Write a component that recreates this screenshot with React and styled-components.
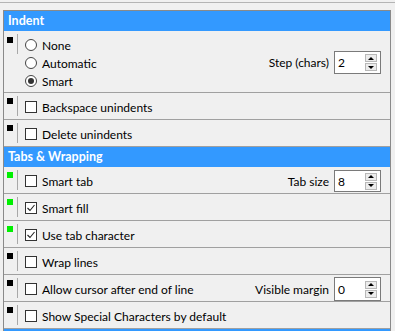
import React from "react";
import styled, { createGlobalStyle } from "styled-components";

const GlobalStyle = createGlobalStyle`
	html, body {
		margin: 0;
		padding: 0;
		background: #f0f0f0;
		overflow: hidden;
	}
	body {
		font-family: Lato, "Noto Sans", sans-serif;
		font-size: 12px;
		color: #000;
	}
`;

const Frame = styled.div`
	margin-top: 2px;
	border-top: 1px solid #b4b4b4;
	padding: 7px 0 0 3px;
	height: 340px;
`;

const Panel = styled.div`
	width: 386px;
	border: 1px solid #8a8a8a;
	border-bottom: none;
	background: #f0f0f0;
`;

const Header = styled.div`
	height: 20px;
	line-height: 20px;
	padding-left: 4px;
	background: #3399ff;
	color: #fff;
	font-size: 12.5px;
	font-weight: 700;
`;

const Row = styled.div`
	display: flex;
	height: ${props => props.height || 26}px;
	border-bottom: 1px solid #a0a0a0;
`;

const Gutter = styled.div`
	width: 13px;
	flex: none;
	padding: ${props => props.top || 5}px 0 0 3px;
	box-sizing: border-box;
`;

const Marker = styled.div`
	width: 6px;
	height: 6px;
	background: ${props => (props.on ? "#00f000" : "#000")};
`;

const Divider = styled.div`
	width: 1px;
	height: 20px;
	margin-top: 3px;
	flex: none;
	background: #a8a8a8;
`;

const Content = styled.div`
	flex: 1;
	display: flex;
	align-items: center;
	padding: 2px 9px 0 7px;
`;

const Option = styled.label`
	display: flex;
	align-items: center;
	gap: 5px;
	height: 18px;
	white-space: nowrap;
`;

const Box = styled.span`
	width: 12px;
	height: 12px;
	box-sizing: border-box;
	border: 1px solid #333;
	background: #fff;
	display: flex;
	align-items: center;
	justify-content: center;
	flex: none;
`;

const Radio = styled(Box)`
	border-radius: 50%;
	border-color: #444;

	&::after {
		content: "";
		display: ${props => (props.checked ? "block" : "none")};
		width: 6px;
		height: 6px;
		border-radius: 50%;
		background: #333;
	}
`;

const RadioGroup = styled.div`
	display: flex;
	flex-direction: column;
	align-self: flex-start;
	padding-top: 3px;
`;

const Spacer = styled.div`
	flex: 1;
`;

const SpinLabel = styled.span`
	margin-right: 5px;
	white-space: nowrap;
`;

const SpinBox = styled.div`
	width: 47px;
	height: ${props => props.height || 22}px;
	box-sizing: border-box;
	border: 1px solid #7a7a7a;
	background: #fff;
	display: flex;
	align-items: center;
	padding: 0 3px 0 3px;
`;

const SpinValue = styled.span`
	flex: 1;
`;

const SpinButtons = styled.div`
	display: flex;
	flex-direction: column;
	gap: 1px;
`;

const SpinButton = styled.div`
	width: 12px;
	height: 8px;
	box-sizing: border-box;
	border: 1px solid #b8b8b8;
	background: #ececec;
	display: flex;
	align-items: center;
	justify-content: center;

	&::after {
		content: "";
		border-left: 3px solid transparent;
		border-right: 3px solid transparent;
		${props =>
			props.down
				? "border-top: 3px solid #000;"
				: "border-bottom: 3px solid #000;"}
	}
`;

function Check({ checked }) {
	return (
		<Box>
			{checked && (
				<svg width="10" height="10" viewBox="0 0 10 10">
					<path d="M1.5 5 L4 7.5 L8.5 2" fill="none" stroke="#222" strokeWidth="1.1" />
				</svg>
			)}
		</Box>
	);
}

function Spin({ label, value, height }) {
	return (
		<>
			<Spacer />
			<SpinLabel>{label}</SpinLabel>
			<SpinBox height={height}>
				<SpinValue>{value}</SpinValue>
				<SpinButtons>
					<SpinButton />
					<SpinButton down />
				</SpinButtons>
			</SpinBox>
		</>
	);
}

function CheckRow({ label, checked, green, spin }) {
	return (
		<Row>
			<Gutter>
				<Marker on={green} />
			</Gutter>
			<Divider />
			<Content>
				<Option>
					<Check checked={checked} />
					{label}
				</Option>
				{spin && <Spin {...spin} />}
			</Content>
		</Row>
	);
}

export default function App() {
	return (
		<>
			<GlobalStyle />
			<Frame>
				<Panel>
					<Header>Indent</Header>
					<Row height={61}>
						<Gutter top={6}>
							<Marker />
						</Gutter>
						<Divider />
						<Content>
							<RadioGroup>
								<Option>
									<Radio />
									None
								</Option>
								<Option>
									<Radio />
									Automatic
								</Option>
								<Option>
									<Radio checked />
									Smart
								</Option>
							</RadioGroup>
							<Spin label="Step (chars)" value="2" height={23} />
						</Content>
					</Row>
					<CheckRow label="Backspace unindents" />
					<CheckRow label="Delete unindents" />
					<Header>Tabs &amp; Wrapping</Header>
					<CheckRow label="Smart tab" green spin={{ label: "Tab size", value: "8" }} />
					<CheckRow label="Smart fill" green checked />
					<CheckRow label="Use tab character" green checked />
					<CheckRow label="Wrap lines" />
					<CheckRow
						label="Allow cursor after end of line"
						spin={{ label: "Visible margin", value: "0", height: 24 }}
					/>
					<CheckRow label="Show Special Characters by default" />
					<Header />
				</Panel>
			</Frame>
		</>
	);
}
